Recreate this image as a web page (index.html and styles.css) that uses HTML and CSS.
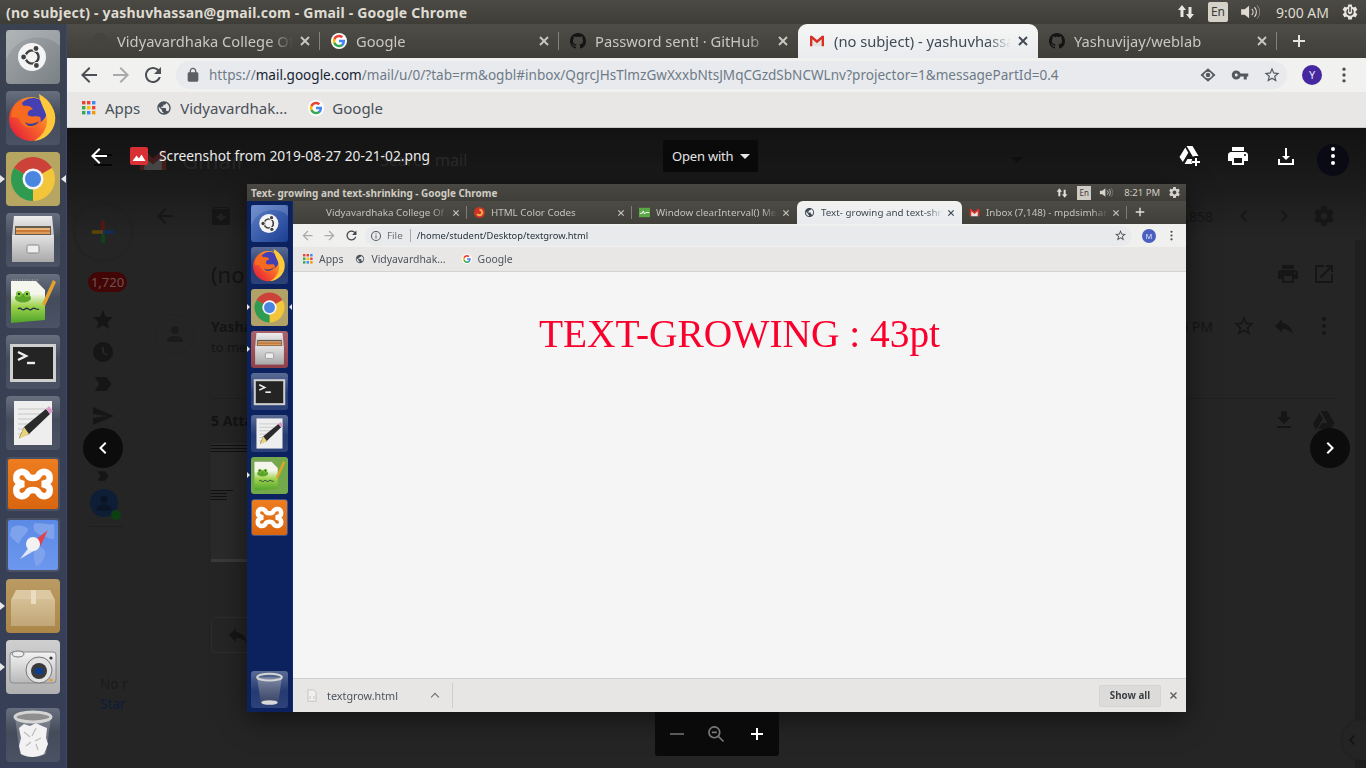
FILE: index.html
```html
<!DOCTYPE html>
<html lang="en">
<head>
    <meta charset="UTF-8">
    <title>(no subject) - yashuvhassan@gmail.com - Gmail - Google Chrome</title>
    <link rel="stylesheet" href="styles.css">
</head>
<body>
    <!-- shared icons -->
    <svg class="defs" xmlns="http://www.w3.org/2000/svg">
        <defs>
            <linearGradient id="g-ff" x1="0.9" y1="0.2" x2="0.1" y2="0.9"><stop offset="0" stop-color="#ffb52e"/><stop offset="0.5" stop-color="#f7632a"/><stop offset="1" stop-color="#e5203a"/></linearGradient>
            <linearGradient id="g-kate" x1="0" y1="0" x2="0" y2="1"><stop offset="0.3" stop-color="#f4f6ee"/><stop offset="0.6" stop-color="#9ed34c"/><stop offset="1" stop-color="#4fa32a"/></linearGradient>
            <linearGradient id="g-cab" x1="0" y1="0" x2="0" y2="1"><stop offset="0" stop-color="#e2e2e2"/><stop offset="1" stop-color="#a9a9a9"/></linearGradient>
            <linearGradient id="g-lid" x1="0" y1="0" x2="0" y2="1"><stop offset="0" stop-color="#ededed"/><stop offset="1" stop-color="#bdbdbd"/></linearGradient>
            <linearGradient id="g-box" x1="0" y1="0" x2="0" y2="1"><stop offset="0" stop-color="#d5bf94"/><stop offset="1" stop-color="#c0a678"/></linearGradient>
            <linearGradient id="g-cam" x1="0" y1="0" x2="0" y2="1"><stop offset="0" stop-color="#f4f4f4"/><stop offset="1" stop-color="#b8b8b8"/></linearGradient>
            <linearGradient id="g-bin" x1="0" y1="0" x2="0" y2="1"><stop offset="0" stop-color="#8d95ab"/><stop offset="1" stop-color="#39415f"/></linearGradient>
        </defs>

        <symbol id="l-ubuntu" viewBox="0 0 54 54">
            <path d="M0 30C10 4 40 2 54 16V0H0Z" fill="#fff" opacity=".14"/>
            <circle cx="26" cy="27" r="14" fill="#f4f4f4"/>
            <circle cx="26" cy="27" r="6.6" fill="none" stroke="#3f3f40" stroke-width="2.4"/>
            <circle cx="30" cy="18.5" r="3.6" fill="#f4f4f4"/><circle cx="17.6" cy="27" r="3.6" fill="#f4f4f4"/><circle cx="30.4" cy="35.5" r="3.6" fill="#f4f4f4"/>
            <circle cx="30" cy="18.5" r="2.4" fill="#3f3f40"/><circle cx="17.6" cy="27" r="2.4" fill="#3f3f40"/><circle cx="30.4" cy="35.5" r="2.4" fill="#3f3f40"/>
        </symbol>
        <symbol id="l-firefox" viewBox="0 0 54 54">
            <circle cx="25" cy="28" r="22" fill="url(#g-ff)"/>
            <ellipse cx="27" cy="20" rx="14" ry="13" fill="#4440b4"/>
            <path d="M5 26C6 16 11 10 17 8 15 11 16 14 18 15 21 14 25 15 27 18 23 19 21 21 22 24 25 27 31 24 34 26 37 31 32 37 25 37 18 37 14 31 13 27Z" fill="#f66b1f"/>
            <path d="M19 31C23 34 29 33 33 30 32 33 28 35 24 35 22 35 20 33 19 31Z" fill="#3b3c9a"/>
            <path d="M33 3C44 9 51 20 49 31 47 42 38 49 28 50 36 45 41 38 41 30 41 20 34 14 33 3Z" fill="#ffc83a"/>
        </symbol>
        <symbol id="l-chrome" viewBox="0 0 54 54">
            <path d="M27 27 8 16A22 22 0 0 1 46 16Z" fill="#cc4238"/>
            <path d="M27 27 46 16A22 22 0 0 1 27 49Z" fill="#f2c53a"/>
            <path d="M27 27 27 49A22 22 0 0 1 8 16Z" fill="#2f9b50"/>
            <circle cx="27" cy="27" r="10.5" fill="#f5f5f5"/><circle cx="27" cy="27" r="8" fill="#4a86e0"/>
        </symbol>
        <symbol id="l-files" viewBox="0 0 54 54">
            <path d="M8 3H46L48 23H6Z" fill="url(#g-lid)"/>
            <rect x="9" y="13" width="36" height="9" fill="#655a50"/>
            <rect x="10" y="15" width="34" height="2" fill="#e8b57a"/><rect x="10" y="17" width="34" height="2" fill="#c97a3a"/><rect x="10" y="19" width="34" height="2" fill="#e09a58"/>
            <rect x="6" y="22" width="42" height="27" fill="url(#g-cab)"/>
            <rect x="21" y="32" width="12" height="8" rx="1.5" fill="#eee" stroke="#888"/>
        </symbol>
        <symbol id="l-kate" viewBox="0 0 54 54">
            <path d="M5 7H30L39 16V46L5 49Z" fill="url(#g-kate)"/>
            <path d="M6 6h26" stroke="#999" stroke-width="1.5" stroke-dasharray="1 1.5"/>
            <ellipse cx="17" cy="24" rx="8" ry="4.5" fill="#5aa428"/><circle cx="13" cy="20" r="3" fill="#7ec63f"/><circle cx="21" cy="20" r="3" fill="#7ec63f"/><circle cx="13" cy="20" r="1.1" fill="#222"/><circle cx="21" cy="20" r="1.1" fill="#222"/>
            <path d="M12 35c3-3 4 3 7 0s4 3 7 0 4 2 7 0" fill="none" stroke="#234" stroke-width="1.4"/>
            <path d="M47 6 50 8 39 32 36 30Z" fill="#e4a22c"/>
        </symbol>
        <symbol id="l-terminal" viewBox="0 0 54 54">
            <rect x="4" y="9" width="46" height="38" fill="#cfcfcf"/>
            <rect x="7" y="12" width="40" height="32" fill="#242424"/>
            <path d="M12 17 20 21 12 25" fill="none" stroke="#eee" stroke-width="2.4"/>
            <path d="M21 28H29" stroke="#eee" stroke-width="2.4"/>
        </symbol>
        <symbol id="l-gedit" viewBox="0 0 54 54">
            <rect x="8" y="5" width="38" height="44" fill="#eeeeee"/>
            <path d="M12 13H42M12 18H42M12 23H38M12 28H32M12 33H26M12 38H24" stroke="#c6c6c6" stroke-width="1.2"/>
            <path d="M13 42 18 31 40 13 44 18 23 38Z" fill="#2b2b2b"/>
            <path d="M13 43 18 31 23 38Z" fill="#ead27a"/>
            <path d="M40 13 43 10 47 15 44 18Z" fill="#dd9ccb"/>
        </symbol>
        <symbol id="l-xampp" viewBox="0 0 54 54">
            <path d="M22 19C18 11 8 13 9 21 9 25 13 26 17 27 13 28 9 29 9 33 8 41 18 43 22 35 24 33 30 33 32 35 36 43 46 41 45 33 45 29 41 28 37 27 41 26 45 25 45 21 46 13 36 11 32 19 30 21 24 21 22 19Z" fill="none" stroke="#fff" stroke-width="7"/>
        </symbol>
        <symbol id="l-compass" viewBox="0 0 54 54">
            <path d="M4 8C12 4 18 6 22 10 20 16 14 18 12 26 8 24 4 20 2 16ZM28 4C36 2 44 6 50 4V20C44 22 40 16 34 16 30 14 26 10 28 4ZM30 30C36 28 42 32 40 38 38 44 34 50 30 50 28 42 26 36 30 30Z" fill="#7ea3ec"/>
            <path d="M43 11 29 22 35 28Z" fill="#e5414b"/>
            <path d="M13 42 26 25 32 31Z" fill="#dfe6f4"/>
            <circle cx="27" cy="26" r="7.6" fill="#f2f2f2"/>
        </symbol>
        <symbol id="l-package" viewBox="0 0 54 54">
            <path d="M10 11H44L49 21H5Z" fill="#dcc8a2"/>
            <rect x="5" y="20" width="44" height="27" fill="url(#g-box)"/>
            <rect x="25" y="11" width="5" height="14" fill="#eadcc0"/>
        </symbol>
        <symbol id="l-camera" viewBox="0 0 54 54">
            <rect x="4" y="12" width="46" height="31" rx="3" fill="url(#g-cam)" stroke="#8a8a8a"/>
            <ellipse cx="12" cy="14" rx="6" ry="3" fill="#eee" stroke="#777"/>
            <circle cx="33" cy="30" r="13" fill="#e2e2e2" stroke="#777"/>
            <circle cx="33" cy="31" r="8" fill="#3a3a3a"/><rect x="29" y="28" width="8" height="6" fill="#0b3d91"/>
            <circle cx="45" cy="18" r="1.6" fill="#333"/><circle cx="45" cy="40" r="1.6" fill="#e89a2c"/>
        </symbol>
        <symbol id="l-trash" viewBox="0 0 54 54">
            <path d="M9 9 14 46C20 50 34 50 40 46L45 9Z" fill="#ffffff" opacity=".22"/>
            <path d="M13 20 18 16 24 18 30 15 36 18 41 20 40 30 42 36 38 46C30 50 22 50 15 46L13 38 15 30Z" fill="#f2f2f2"/>
            <path d="M18 24l6 5M30 20l-4 8M35 30l-6 3M20 38l5-4M32 42l-2-6" stroke="#bcbcbc" stroke-width="1.2"/>
            <ellipse cx="27" cy="9" rx="18" ry="5" fill="#8f8f8f" stroke="#d5d5d5" stroke-width="3"/>
        </symbol>
        <symbol id="l-trash-empty" viewBox="0 0 54 54">
            <path d="M9 9 14 46C20 50 34 50 40 46L45 9Z" fill="url(#g-bin)" opacity=".8"/>
            <ellipse cx="27" cy="46" rx="12" ry="3.4" fill="#d8d8d8"/>
            <ellipse cx="27" cy="9" rx="18" ry="5" fill="none" stroke="#d5d5d5" stroke-width="3"/>
        </symbol>

        <symbol id="i-back" viewBox="0 0 24 24"><path d="M20 11H7.83l5.59-5.59L12 4l-8 8 8 8 1.41-1.41L7.83 13H20v-2z"/></symbol>
        <symbol id="i-forward" viewBox="0 0 24 24"><path d="M12 4l-1.41 1.41L16.17 11H4v2h12.17l-5.58 5.59L12 20l8-8z"/></symbol>
        <symbol id="i-reload" viewBox="0 0 24 24"><path d="M17.65 6.35C16.2 4.9 14.21 4 12 4c-4.42 0-7.99 3.58-7.99 8s3.57 8 7.99 8c3.73 0 6.84-2.55 7.73-6h-2.08c-.82 2.33-3.04 4-5.65 4-3.31 0-6-2.69-6-6s2.69-6 6-6c1.66 0 3.14.69 4.22 1.78L13 11h7V4l-2.35 2.35z"/></symbol>
        <symbol id="i-lock" viewBox="0 0 24 24"><path fill-rule="evenodd" d="M18 8h-1V6c0-2.76-2.24-5-5-5S7 3.24 7 6v2H6c-1.1 0-2 .9-2 2v10c0 1.1.9 2 2 2h12c1.1 0 2-.9 2-2V10c0-1.1-.9-2-2-2zM9 8V6c0-1.66 1.34-3 3-3s3 1.34 3 3v2H9z"/></symbol>
        <symbol id="i-star-o" viewBox="0 0 24 24"><path d="M22 9.24l-7.19-.62L12 2 9.19 8.63 2 9.24l5.46 4.73L5.82 21 12 17.27 18.18 21l-1.63-7.03L22 9.24zM12 15.4l-3.76 2.27 1-4.28-3.32-2.88 4.38-.38L12 6.1l1.71 4.04 4.38.38-3.32 2.88 1 4.28L12 15.4z"/></symbol>
        <symbol id="i-star" viewBox="0 0 24 24"><path d="M12 17.27L18.18 21l-1.64-7.03L22 9.24l-7.19-.61L12 2 9.19 8.63 2 9.24l5.46 4.73L5.82 21z"/></symbol>
        <symbol id="i-key" viewBox="0 0 24 24"><path d="M12.65 10C11.83 7.67 9.61 6 7 6c-3.31 0-6 2.69-6 6s2.69 6 6 6c2.61 0 4.83-1.67 5.65-4H17v4h4v-4h2v-4H12.65zM7 14c-1.1 0-2-.9-2-2s.9-2 2-2 2 .9 2 2-.9 2-2 2z"/></symbol>
        <symbol id="i-eye" viewBox="0 0 24 24"><path fill-rule="evenodd" d="M12 3l10 9-10 9-10-9zM12 7.5c-3 0-5 2.5-6 4.5 1 2 3 4.5 6 4.5s5-2.5 6-4.5c-1-2-3-4.5-6-4.5z"/><circle cx="12" cy="12" r="3"/></symbol>
        <symbol id="i-dots" viewBox="0 0 24 24"><circle cx="12" cy="5" r="2"/><circle cx="12" cy="12" r="2"/><circle cx="12" cy="19" r="2"/></symbol>
        <symbol id="i-print" viewBox="0 0 24 24"><path d="M19 8H5c-1.66 0-3 1.34-3 3v6h4v4h12v-4h4v-6c0-1.66-1.34-3-3-3zm-3 11H8v-5h8v5zm3-7c-.55 0-1-.45-1-1s.45-1 1-1 1 .45 1 1-.45 1-1 1zm-1-9H6v4h12V3z"/></symbol>
        <symbol id="i-download" viewBox="0 0 24 24"><path d="M19 9h-4V3H9v6H5l7 7 7-7zM5 18v2h14v-2H5z"/></symbol>
        <symbol id="i-save" viewBox="0 0 24 24"><path d="M13 4h-2v8H8l4 4 4-4h-3zM4 15h2v4h12v-4h2v6H4z"/></symbol>
        <symbol id="i-gear" viewBox="0 0 24 24"><path d="M19.43 12.98c.04-.32.07-.64.07-.98s-.03-.66-.07-.98l2.11-1.65c.19-.15.24-.42.12-.64l-2-3.46c-.12-.22-.39-.3-.61-.22l-2.49 1c-.52-.4-1.08-.73-1.69-.98l-.38-2.65C14.46 2.18 14.25 2 14 2h-4c-.25 0-.46.18-.49.42l-.38 2.65c-.61.25-1.17.59-1.69.98l-2.49-1c-.23-.09-.49 0-.61.22l-2 3.46c-.13.22-.07.49.12.64l2.11 1.65c-.04.32-.07.65-.07.98s.03.66.07.98l-2.11 1.65c-.19.15-.24.42-.12.64l2 3.46c.12.22.39.3.61.22l2.49-1c.52.4 1.08.73 1.69.98l.38 2.65c.03.24.24.42.49.42h4c.25 0 .46-.18.49-.42l.38-2.65c.61-.25 1.17-.59 1.69-.98l2.49 1c.23.09.49 0 .61-.22l2-3.46c.12-.22.07-.49-.12-.64l-2.11-1.65zM12 15.5c-1.93 0-3.5-1.57-3.5-3.5s1.57-3.5 3.5-3.5 3.5 1.57 3.5 3.5-1.57 3.5-3.5 3.5z"/></symbol>
        <symbol id="i-power" viewBox="0 0 24 24"><path fill-rule="evenodd" d="M19.43 12.98c.04-.32.07-.64.07-.98s-.03-.66-.07-.98l2.11-1.65c.19-.15.24-.42.12-.64l-2-3.46c-.12-.22-.39-.3-.61-.22l-2.49 1c-.52-.4-1.08-.73-1.69-.98l-.38-2.65C14.46 2.18 14.25 2 14 2h-4c-.25 0-.46.18-.49.42l-.38 2.65c-.61.25-1.17.59-1.69.98l-2.49-1c-.23-.09-.49 0-.61.22l-2 3.46c-.13.22-.07.49.12.64l2.11 1.65c-.04.32-.07.65-.07.98s.03.66.07.98l-2.11 1.65c-.19.15-.24.42-.12.64l2 3.46c.12.22.39.3.61.22l2.49-1c.52.4 1.08.73 1.69.98l.38 2.65c.03.24.24.42.49.42h4c.25 0 .46-.18.49-.42l.38-2.65c.61-.25 1.17-.59 1.69-.98l2.49 1c.23.09.49 0 .61-.22l2-3.46c.12-.22.07-.49-.12-.64l-2.11-1.65zM12 17a5 5 0 0 1-2.5-9.3v2.4a3 3 0 1 0 5 0V7.7A5 5 0 0 1 12 17zM11 5h2v7h-2z"/></symbol>
        <symbol id="i-reply" viewBox="0 0 24 24"><path d="M10 9V5l-7 7 7 7v-4.1c5 0 8.5 1.6 11 5.1-1-5-4-10-11-11z"/></symbol>
        <symbol id="i-open" viewBox="0 0 24 24"><path d="M19 19H5V5h7V3H5c-1.11 0-2 .9-2 2v14c0 1.1.89 2 2 2h14c1.1 0 2-.9 2-2v-7h-2v7zM14 3v2h3.59l-9.83 9.83 1.41 1.41L19 6.41V10h2V3h-7z"/></symbol>
        <symbol id="i-clock" viewBox="0 0 24 24"><path fill-rule="evenodd" d="M12 2a10 10 0 1 0 0 20 10 10 0 0 0 0-20zm1 5h-2v6l5 3 1-1.6-4-2.4z"/></symbol>
        <symbol id="i-label" viewBox="0 0 24 24"><path d="M3.5 18.99l11 .01c.67 0 1.27-.33 1.63-.84L20.5 12l-4.37-6.16c-.36-.51-.96-.84-1.63-.84l-11 .01L8.34 12 3.5 18.99z"/></symbol>
        <symbol id="i-send" viewBox="0 0 24 24"><path d="M2.01 21L23 12 2.01 3 2 10l15 2-15 2z"/></symbol>
        <symbol id="i-archive" viewBox="0 0 24 24"><path d="M20.54 5.23l-1.39-1.68C18.88 3.21 18.47 3 18 3H6c-.47 0-.88.21-1.16.55L3.46 5.23C3.17 5.57 3 6.02 3 6.5V19c0 1.1.9 2 2 2h14c1.1 0 2-.9 2-2V6.5c0-.48-.17-.93-.46-1.27zM12 17.5L6.5 12H10v-2h4v2h3.5L12 17.5zM5.12 5l.81-1h12l.94 1H5.12z"/></symbol>
        <symbol id="i-left" viewBox="0 0 24 24"><path d="M15.41 7.41L14 6l-6 6 6 6 1.41-1.41L10.83 12z"/></symbol>
        <symbol id="i-right" viewBox="0 0 24 24"><path d="M10 6L8.59 7.41 13.17 12l-4.58 4.59L10 18l6-6z"/></symbol>
        <symbol id="i-drive" viewBox="0 0 24 24"><path d="M8.5 3h7l7 12h-7zM7.3 5l3.5 6-6.5 10.5L1 16zM6.5 21l3.5-6h12.5L19 21z"/></symbol>
        <symbol id="i-drive-add" viewBox="0 0 24 24"><path d="M8.5 2h6l6 10h-3.2a5 5 0 0 0-2.4.8zM7.3 3.6l3 5.2L4.8 18 1.5 13zM6.5 20l3-5h4.6a5 5 0 0 0 .4 5zM17 14h2v3h3v2h-3v3h-2v-3h-3v-2h3z"/></symbol>
        <symbol id="i-globe" viewBox="0 0 24 24"><path d="M12 2C6.48 2 2 6.48 2 12s4.48 10 10 10 10-4.48 10-10S17.52 2 12 2zm-1 17.93c-3.95-.49-7-3.85-7-7.93 0-.62.08-1.21.21-1.79L9 15v1c0 1.1.9 2 2 2v1.93zm6.9-2.54c-.26-.81-1-1.39-1.9-1.39h-1v-3c0-.55-.45-1-1-1H8v-2h2c.55 0 1-.45 1-1V7h2c1.1 0 2-.9 2-2v-.41c2.93 1.19 5 4.06 5 7.41 0 2.08-.8 3.97-2.1 5.39z"/></symbol>
        <symbol id="i-info" viewBox="0 0 24 24"><path fill-rule="evenodd" d="M12 2a10 10 0 1 0 0 20 10 10 0 0 0 0-20zm0 2a8 8 0 1 1 0 16 8 8 0 0 1 0-16zm-1 3h2v2h-2zm0 4h2v6h-2z"/></symbol>
        <symbol id="i-github" viewBox="0 0 16 16"><path d="M8 0C3.58 0 0 3.58 0 8c0 3.54 2.29 6.53 5.47 7.59.4.07.55-.17.55-.38 0-.19-.01-.82-.01-1.49-2.01.37-2.53-.49-2.69-.94-.09-.23-.48-.94-.82-1.13-.28-.15-.68-.52-.01-.53.63-.01 1.08.58 1.23.82.72 1.21 1.87.87 2.33.66.07-.52.28-.87.51-1.07-1.78-.2-3.64-.89-3.64-3.95 0-.87.31-1.59.82-2.15-.08-.2-.36-1.02.08-2.12 0 0 .67-.21 2.2.82.64-.18 1.32-.27 2-.27.68 0 1.36.09 2 .27 1.53-1.04 2.2-.82 2.2-.82.44 1.1.16 1.92.08 2.12.51.56.82 1.27.82 2.15 0 3.07-1.87 3.75-3.65 3.95.29.25.54.73.54 1.48 0 1.07-.01 1.93-.01 2.2 0 .21.15.46.55.38A8.013 8.013 0 0016 8c0-4.42-3.58-8-8-8z"/></symbol>
        <symbol id="i-google" viewBox="-4 -4 56 56">
            <circle cx="24" cy="24" r="28" fill="#fff"/>
            <path fill="#4285f4" d="M45.1 24.5c0-1.6-.1-3.1-.4-4.5H24v8.5h11.8c-.5 2.7-2.1 5-4.4 6.6v5.5h7.1c4.2-3.8 6.6-9.5 6.6-16.1z"/>
            <path fill="#34a853" d="M24 46c5.9 0 10.9-2 14.5-5.3l-7.1-5.5c-2 1.3-4.5 2.1-7.4 2.1-5.7 0-10.5-3.8-12.2-9H4.5v5.7C8.1 41.1 15.5 46 24 46z"/>
            <path fill="#fbbc05" d="M11.8 28.3c-.4-1.3-.7-2.7-.7-4.3s.3-3 .7-4.3V14H4.5C3 17 2.2 20.4 2.2 24s.8 7 2.3 10z"/>
            <path fill="#ea4335" d="M24 10.7c3.2 0 6.1 1.1 8.4 3.3l6.3-6.3C34.9 4.2 29.9 2 24 2 15.5 2 8.1 6.9 4.5 14l7.3 5.7c1.7-5.2 6.5-9 12.2-9z"/>
        </symbol>
        <symbol id="i-gmail" viewBox="0 0 48 48">
            <path d="M8 12 24 26 40 12V40H8Z" fill="#e3e3e3"/>
            <path d="M3 8H9L24 21 39 8H45V40H38V19L24 31 10 19V40H3Z" fill="#d93025"/>
        </symbol>
        <symbol id="i-apps" viewBox="0 0 14 14">
            <rect width="3.4" height="3.4" x="0" y="0" fill="#ea4335"/><rect width="3.4" height="3.4" x="5" y="0" fill="#ea4335"/><rect width="3.4" height="3.4" x="10" y="0" fill="#4285f4"/>
            <rect width="3.4" height="3.4" x="0" y="5" fill="#34a853"/><rect width="3.4" height="3.4" x="5" y="5" fill="#fbbc05"/><rect width="3.4" height="3.4" x="10" y="5" fill="#ea4335"/>
            <rect width="3.4" height="3.4" x="0" y="10" fill="#34a853"/><rect width="3.4" height="3.4" x="5" y="10" fill="#4285f4"/><rect width="3.4" height="3.4" x="10" y="10" fill="#f29900"/>
        </symbol>
        <symbol id="i-photo" viewBox="0 0 18 18">
            <rect width="18" height="18" rx="2" fill="#d93035"/>
            <path d="M2.5 14 6.5 8.5 9 11.5 11.5 7.5 15.5 14Z" fill="#fff"/>
        </symbol>
        <symbol id="i-net" viewBox="0 0 18 18"><path d="M5 2 9 7H6.5V14H3.5V7H1ZM13 16 9 11H11.5V4H14.5V11H17Z"/></symbol>
        <symbol id="i-sound" viewBox="0 0 22 18"><path d="M1 6H5L10 2V16L5 12H1Z"/><path d="M13 5.5a5 5 0 0 1 0 7M16 3.5a8 8 0 0 1 0 11" fill="none" stroke="currentColor" stroke-width="1.3"/><path d="M19 1.5a11 11 0 0 1 0 15" fill="none" stroke="currentColor" stroke-width="1" opacity=".5"/></symbol>
        <symbol id="i-close" viewBox="0 0 12 12"><path d="M2 2 10 10M10 2 2 10" fill="none" stroke="currentColor" stroke-width="1.9"/></symbol>
        <symbol id="i-plus" viewBox="0 0 14 14"><path d="M7 1V13M1 7H13" fill="none" stroke="currentColor" stroke-width="2"/></symbol>
        <symbol id="i-html" viewBox="0 0 14 14"><circle cx="7" cy="7" r="7" fill="#cf3327"/><path d="M7 3.5a3.5 3.5 0 1 1-3 5.3" fill="none" stroke="#f6b24a" stroke-width="2.4"/></symbol>
        <symbol id="i-chart" viewBox="0 0 14 12"><rect width="14" height="12" fill="#59a845"/><path d="M1 7H4L5.5 4 7 8 8.5 6H13" fill="none" stroke="#fff" stroke-width="1.2"/></symbol>
        <symbol id="i-zoom-out" viewBox="0 0 24 24"><circle cx="10" cy="10" r="6.5" fill="none" stroke="currentColor" stroke-width="2"/><path d="M7 10H13M15 15 21 21" fill="none" stroke="currentColor" stroke-width="2"/></symbol>
        <symbol id="i-file" viewBox="0 0 12 16"><path d="M1 1H8L11 4V15H1Z" fill="#efefed" stroke="#bdbdbb"/><path d="M4 9 3 10.5 4 12M8 9 9 10.5 8 12" fill="none" stroke="#9a9a98" stroke-width=".8"/></symbol>
    </svg>

    <header class="panel">
        <span class="panel-title">(no subject) - yashuvhassan@gmail.com - Gmail - Google Chrome</span>
        <div class="panel-tray">
            <svg class="tray-net"><use href="#i-net"/></svg>
            <span class="tray-lang">En</span>
            <svg class="tray-sound"><use href="#i-sound"/></svg>
            <span class="tray-time">9:00 AM</span>
            <svg class="tray-power"><use href="#i-power"/></svg>
        </div>
    </header>

    <div class="desktop">
        <nav class="launcher">
            <div class="tile tile-ubuntu"><svg><use href="#l-ubuntu"/></svg></div>
            <div class="tile tile-glass"><svg><use href="#l-firefox"/></svg></div>
            <div class="tile tile-gold running active"><svg><use href="#l-chrome"/></svg></div>
            <div class="tile tile-glass"><svg><use href="#l-files"/></svg></div>
            <div class="tile tile-glass"><svg><use href="#l-kate"/></svg></div>
            <div class="tile tile-glass"><svg><use href="#l-terminal"/></svg></div>
            <div class="tile tile-glass"><svg><use href="#l-gedit"/></svg></div>
            <div class="tile tile-orange"><svg><use href="#l-xampp"/></svg></div>
            <div class="tile tile-blue"><svg><use href="#l-compass"/></svg></div>
            <div class="tile tile-tan running"><svg><use href="#l-package"/></svg></div>
            <div class="tile tile-silver running"><svg><use href="#l-camera"/></svg></div>
            <div class="tile tile-glass tile-last"><svg><use href="#l-trash"/></svg></div>
        </nav>

        <main class="chrome">
            <div class="tabstrip">
                <div class="tab">
                    <span class="tab-icon tab-icon-dim"></span>
                    <span class="tab-title">Vidyavardhaka College Of Engineering</span>
                    <svg class="tab-close"><use href="#i-close"/></svg>
                </div>
                <div class="tab">
                    <svg class="tab-icon"><use href="#i-google"/></svg>
                    <span class="tab-title">Google</span>
                    <svg class="tab-close"><use href="#i-close"/></svg>
                </div>
                <div class="tab tab-nosep">
                    <svg class="tab-icon icon-dark"><use href="#i-github"/></svg>
                    <span class="tab-title">Password sent! · GitHub</span>
                    <svg class="tab-close"><use href="#i-close"/></svg>
                </div>
                <div class="tab tab-active">
                    <svg class="tab-icon"><use href="#i-gmail"/></svg>
                    <span class="tab-title">(no subject) - yashuvhassan@gmail.com</span>
                    <svg class="tab-close"><use href="#i-close"/></svg>
                </div>
                <div class="tab">
                    <svg class="tab-icon icon-dark"><use href="#i-github"/></svg>
                    <span class="tab-title">Yashuvijay/weblab</span>
                    <svg class="tab-close"><use href="#i-close"/></svg>
                </div>
                <svg class="tab-new"><use href="#i-plus"/></svg>
            </div>

            <div class="toolbar">
                <svg class="tool"><use href="#i-back"/></svg>
                <svg class="tool tool-off"><use href="#i-forward"/></svg>
                <svg class="tool"><use href="#i-reload"/></svg>
                <div class="omnibox">
                    <svg class="omni-lock"><use href="#i-lock"/></svg>
                    <span class="omni-url">https://<b>mail.google.com</b>/mail/u/0/?tab=rm&amp;ogbl#inbox/QgrcJHsTlmzGwXxxbNtsJMqCGzdSbNCWLnv?projector=1&amp;messagePartId=0.4</span>
                    <svg class="omni-act"><use href="#i-eye"/></svg>
                    <svg class="omni-act"><use href="#i-key"/></svg>
                    <svg class="omni-act"><use href="#i-star-o"/></svg>
                </div>
                <span class="avatar">Y</span>
                <svg class="tool tool-menu"><use href="#i-dots"/></svg>
            </div>

            <div class="bookmarks">
                <span class="mark mark-apps"><svg class="apps-icon"><use href="#i-apps"/></svg>Apps</span>
                <span class="mark mark-vidya"><svg class="mark-icon"><use href="#i-globe"/></svg>Vidyavardhak...</span>
                <span class="mark"><svg class="mark-icon"><use href="#i-google"/></svg>Google</span>
            </div>

            <section class="viewer">
                <!-- gmail page dimmed behind the preview -->
                <div class="ghost">
                    <div class="ghost-head">
                        <span class="ghost-burger"></span>
                        <svg class="ghost-m"><use href="#i-gmail"/></svg>
                        <span class="ghost-logo">Gmail</span>
                        <span class="ghost-search">Search mail</span>
                        <span class="ghost-caret"></span>
                    </div>
                    <div class="ghost-body">
                        <div class="ghost-nav">
                            <div class="ghost-compose"><svg class="ghost-plus" viewBox="0 0 28 28"><path d="M14 2V14" stroke="#571512" stroke-width="4"/><path d="M14 14V26" stroke="#12411f" stroke-width="4"/><path d="M2 14H14" stroke="#5b430a" stroke-width="4"/><path d="M14 14H26" stroke="#122c55" stroke-width="4"/></svg></div>
                            <span class="ghost-badge">1,720</span>
                            <svg class="gi gi-nav"><use href="#i-star"/></svg>
                            <svg class="gi gi-nav"><use href="#i-clock"/></svg>
                            <svg class="gi gi-nav"><use href="#i-label"/></svg>
                            <svg class="gi gi-nav"><use href="#i-send"/></svg>
                            <svg class="gi gi-nav gi-hidden"><use href="#i-send"/></svg>
                            <svg class="gi gi-nav gi-short"><use href="#i-label"/></svg>
                            <div class="ghost-user"><svg viewBox="0 0 24 24"><circle cx="12" cy="8" r="4.4"/><path d="M3 21c0-5 4-7 9-7s9 2 9 7z"/></svg><span class="ghost-dot"></span></div>
                            <div class="ghost-rule"></div>
                            <p class="ghost-note">No r</p>
                            <p class="ghost-note ghost-link">Star</p>
                        </div>
                        <div class="ghost-main">
                            <div class="grow grow-top">
                                <svg class="gi gi-back"><use href="#i-back"/></svg>
                                <svg class="gi"><use href="#i-archive"/></svg>
                                <div class="grow-right">
                                    <span class="ghost-text">1,858</span>
                                    <svg class="gi"><use href="#i-left"/></svg>
                                    <svg class="gi"><use href="#i-right"/></svg>
                                    <svg class="gi"><use href="#i-gear"/></svg>
                                </div>
                            </div>
                            <div class="grow grow-subject">
                                <span class="ghost-subject">(no subject)</span>
                                <div class="grow-right grow-tight">
                                    <svg class="gi"><use href="#i-print"/></svg>
                                    <svg class="gi"><use href="#i-open"/></svg>
                                </div>
                            </div>
                            <div class="grow grow-sender">
                                <div class="ghost-face"><svg viewBox="0 0 24 24"><circle cx="12" cy="8" r="4"/><path d="M4 20c0-5 4-6 8-6s8 1 8 6z"/></svg></div>
                                <div class="ghost-from"><b>Yashas</b><span>to me,</span></div>
                                <div class="grow-right">
                                    <span class="ghost-text">6 PM</span>
                                    <svg class="gi"><use href="#i-star-o"/></svg>
                                    <svg class="gi"><use href="#i-reply"/></svg>
                                    <svg class="gi"><use href="#i-dots"/></svg>
                                </div>
                            </div>
                            <div class="ghost-dots"></div>
                            <div class="grow grow-attach">
                                <b class="ghost-count">5 Attachments</b>
                                <div class="grow-right">
                                    <svg class="gi"><use href="#i-download"/></svg>
                                    <svg class="gi"><use href="#i-drive"/></svg>
                                </div>
                            </div>
                            <div class="ghost-thumb"><i></i><i></i><i></i><i></i><i></i><i></i><i></i></div>
                            <div class="ghost-reply"><svg class="gi"><use href="#i-reply"/></svg></div>
                        </div>
                        <div class="ghost-scroll"></div>
                    </div>
                </div>

                <div class="viewer-head">
                    <svg class="vh-back"><use href="#i-back"/></svg>
                    <svg class="vh-photo"><use href="#i-photo"/></svg>
                    <span class="vh-name">Screenshot from 2019-08-27 20-21-02.png</span>
                    <button class="open-with">Open with <span class="caret"></span></button>
                    <div class="vh-actions">
                        <svg class="vh-act"><use href="#i-drive-add"/></svg>
                        <svg class="vh-act"><use href="#i-print"/></svg>
                        <svg class="vh-act"><use href="#i-save"/></svg>
                        <span class="vh-more"><svg><use href="#i-dots"/></svg></span>
                    </div>
                </div>

                <button class="page-nav page-prev"><svg><use href="#i-left"/></svg></button>
                <button class="page-nav page-next"><svg><use href="#i-right"/></svg></button>
                <span class="side-toggle"><svg><use href="#i-left"/></svg></span>

                <!-- the attached screenshot -->
                <div class="shot">
                    <div class="s-panel">
                        <span class="s-title">Text- growing and text-shrinking - Google Chrome</span>
                        <div class="s-tray">
                            <svg class="s-net"><use href="#i-net"/></svg>
                            <span class="s-lang">En</span>
                            <svg class="s-sound"><use href="#i-sound"/></svg>
                            <span class="s-time">8:21 PM</span>
                            <svg class="s-power"><use href="#i-gear"/></svg>
                        </div>
                    </div>
                    <div class="s-desktop">
                        <div class="s-launcher">
                            <div class="s-tile s-tile-ubuntu"><svg><use href="#l-ubuntu"/></svg></div>
                            <div class="s-tile s-tile-glass"><svg><use href="#l-firefox"/></svg></div>
                            <div class="s-tile s-tile-gold s-running s-active"><svg><use href="#l-chrome"/></svg></div>
                            <div class="s-tile s-tile-red s-running"><svg><use href="#l-files"/></svg></div>
                            <div class="s-tile s-tile-glass"><svg><use href="#l-terminal"/></svg></div>
                            <div class="s-tile s-tile-glass"><svg><use href="#l-gedit"/></svg></div>
                            <div class="s-tile s-tile-green s-running"><svg><use href="#l-kate"/></svg></div>
                            <div class="s-tile s-tile-orange"><svg><use href="#l-xampp"/></svg></div>
                            <div class="s-tile s-tile-glass s-last"><svg><use href="#l-trash-empty"/></svg></div>
                        </div>
                        <div class="s-chrome">
                            <div class="s-tabs">
                                <div class="s-tab">
                                    <span class="s-fav"></span>
                                    <span class="s-tab-title">Vidyavardhaka College Of Engineering</span>
                                    <svg class="s-close"><use href="#i-close"/></svg>
                                </div>
                                <div class="s-tab">
                                    <svg class="s-fav"><use href="#i-html"/></svg>
                                    <span class="s-tab-title">HTML Color Codes</span>
                                    <svg class="s-close"><use href="#i-close"/></svg>
                                </div>
                                <div class="s-tab s-nosep">
                                    <svg class="s-fav"><use href="#i-chart"/></svg>
                                    <span class="s-tab-title">Window clearInterval() Method</span>
                                    <svg class="s-close"><use href="#i-close"/></svg>
                                </div>
                                <div class="s-tab s-tab-active">
                                    <svg class="s-fav"><use href="#i-globe"/></svg>
                                    <span class="s-tab-title">Text- growing and text-shrinking</span>
                                    <svg class="s-close"><use href="#i-close"/></svg>
                                </div>
                                <div class="s-tab">
                                    <svg class="s-fav"><use href="#i-gmail"/></svg>
                                    <span class="s-tab-title">Inbox (7,148) - mpdsimhan@gmail.com</span>
                                    <svg class="s-close"><use href="#i-close"/></svg>
                                </div>
                                <svg class="s-new"><use href="#i-plus"/></svg>
                            </div>
                            <div class="s-toolbar">
                                <svg class="s-tool s-off"><use href="#i-back"/></svg>
                                <svg class="s-tool s-off"><use href="#i-forward"/></svg>
                                <svg class="s-tool"><use href="#i-reload"/></svg>
                                <div class="s-omni">
                                    <svg class="s-info"><use href="#i-info"/></svg>
                                    <span class="s-file">File</span>
                                    <span class="s-path">/home/student/Desktop/textgrow.html</span>
                                    <svg class="s-star"><use href="#i-star-o"/></svg>
                                </div>
                                <span class="s-avatar">M</span>
                                <svg class="s-tool s-menu"><use href="#i-dots"/></svg>
                            </div>
                            <div class="s-marks">
                                <span class="s-mark s-mark-apps"><svg><use href="#i-apps"/></svg>Apps</span>
                                <span class="s-mark s-mark-vidya"><svg><use href="#i-globe"/></svg>Vidyavardhak...</span>
                                <span class="s-mark"><svg><use href="#i-google"/></svg>Google</span>
                            </div>
                            <div class="s-page">
                                <h1 class="s-heading">TEXT-GROWING : 43pt</h1>
                            </div>
                            <div class="s-downloads">
                                <svg class="s-dl-icon"><use href="#i-file"/></svg>
                                <span class="s-dl-name">textgrow.html</span>
                                <span class="s-dl-caret"></span>
                                <span class="s-dl-sep"></span>
                                <button class="s-showall">Show all</button>
                                <svg class="s-dl-close"><use href="#i-close"/></svg>
                            </div>
                        </div>
                    </div>
                </div>

                <div class="zoombar">
                    <span class="zb-minus"></span>
                    <svg class="zb-lens"><use href="#i-zoom-out"/></svg>
                    <svg class="zb-plus"><use href="#i-plus"/></svg>
                </div>
            </section>
        </main>
    </div>
</body>
</html>
```

FILE: styles.css
```css
* {
    box-sizing: border-box;
}

body {
    margin: 0;
    width: 1366px;
    height: 768px;
    overflow: hidden;
    font-family: "Noto Sans", sans-serif;
    background-color: #252525;
    display: flex;
    flex-direction: column;
}

svg {
    display: block;
    fill: currentColor;
    flex: none;
}

p {
    margin: 0;
}

button {
    font-family: inherit;
    border: none;
    padding: 0;
}

.defs {
    position: absolute;
    width: 0;
    height: 0;
}

/* ubuntu top panel */
.panel {
    height: 24px;
    flex: none;
    display: flex;
    align-items: center;
    padding-left: 6px;
    background: linear-gradient(#4c4a44, #3e3d38);
    color: #dfdbd2;
}

.panel-title {
    font-size: 14px;
    font-weight: 700;
    letter-spacing: .2px;
    white-space: nowrap;
}

.panel-tray {
    margin-left: auto;
    display: flex;
    align-items: center;
}

.tray-net {
    width: 18px;
    height: 18px;
    color: #e8e6df;
}

.tray-lang {
    width: 20px;
    height: 20px;
    margin-left: 13px;
    border-radius: 2px;
    background-color: #d5d2ca;
    color: #3c3b37;
    font-size: 12px;
    line-height: 20px;
    text-align: center;
}

.tray-sound {
    width: 20px;
    height: 16px;
    margin-left: 12px;
    color: #dfdbd2;
}

.tray-time {
    margin-left: 16px;
    font-size: 14px;
    color: #dfdbd2;
}

.tray-power {
    width: 18px;
    height: 18px;
    margin: 0 7px 0 12px;
    color: #e8e6df;
}

.desktop {
    flex: 1;
    display: flex;
    min-height: 0;
}

/* launcher */
.launcher {
    width: 67px;
    flex: none;
    display: flex;
    flex-direction: column;
    gap: 7px;
    padding: 6px 0 6px 6px;
    background: linear-gradient(#3a4150, #373f58);
    border-right: 1px solid #3c4678;
}

.tile {
    position: relative;
    width: 54px;
    height: 54px;
    flex: none;
    border-radius: 4px;
}

.tile svg,
.s-tile svg {
    width: 100%;
    height: 100%;
}

.tile-last {
    margin-top: auto;
}

.tile-glass {
    background: linear-gradient(#686f7e, #444b5b 45%, #4b5264);
}

.tile-ubuntu {
    background: linear-gradient(135deg, #a4a9ac, #7a8185);
}

.tile-gold {
    background-color: #b7a562;
}

.tile-orange {
    background: linear-gradient(#ee7d20, #d9660f);
    border: 2px solid #4a5163;
}

.tile-blue {
    background: linear-gradient(#5b8ae6, #6d97ee);
    border: 2px solid #4a5163;
}

.tile-tan {
    background: linear-gradient(#ba9b63, #ab8647);
}

.tile-silver {
    background: linear-gradient(#cfcfcf, #b0b0b0);
}

.running::before {
    content: "";
    position: absolute;
    left: -6px;
    top: 23px;
    border: 4px solid transparent;
    border-left: 5px solid #e6e6e6;
    border-right: none;
}

.active::after {
    content: "";
    position: absolute;
    right: -6px;
    top: 23px;
    border: 4px solid transparent;
    border-right: 5px solid #e6e6e6;
    border-left: none;
}

/* browser */
.chrome {
    flex: 1;
    min-width: 0;
    display: flex;
    flex-direction: column;
}

.tabstrip {
    height: 34px;
    flex: none;
    display: flex;
    align-items: stretch;
    padding-left: 14px;
    background: linear-gradient(#4f4d47, #3f3e39);
    color: #c9c7c0;
}

.tab {
    width: 239px;
    display: flex;
    align-items: center;
    padding: 0 9px 0 11px;
    position: relative;
}

.tab::after {
    content: "";
    position: absolute;
    right: 0;
    top: 8px;
    bottom: 8px;
    width: 1px;
    background-color: #84827c;
}

.tab-nosep::after,
.tab-active::after {
    display: none;
}

.tab-active {
    width: 240px;
    background: linear-gradient(#f6f6f5, #e9ebee);
    border-radius: 9px 9px 0 0;
    color: #3f4a55;
}

.tab-icon {
    width: 16px;
    height: 16px;
    flex: none;
}

.tab-icon-dim {
    border-radius: 50%;
    background-color: #45443f;
}

.icon-dark {
    color: #141414;
}

.tab-title {
    flex: 1;
    min-width: 0;
    margin: -1px 0 0 9px;
    font-size: 14.7px;
    white-space: nowrap;
    overflow: hidden;
    -webkit-mask-image: linear-gradient(to left, transparent, #000 24px);
    mask-image: linear-gradient(to left, transparent, #000 24px);
}

.tab-close {
    width: 12px;
    height: 12px;
    margin-left: 6px;
    flex: none;
}

.tab-new {
    width: 14px;
    height: 14px;
    margin: 10px 0 0 15px;
    color: #e4e2dc;
}

.toolbar {
    height: 34px;
    flex: none;
    display: flex;
    align-items: center;
    padding-left: 10px;
    background-color: #f1f1f0;
    color: #4c4f53;
}

.tool {
    width: 24px;
    height: 24px;
    margin-right: 8px;
}

.tool-off {
    color: #a8a9ab;
}

.omnibox {
    width: 1111px;
    height: 28px;
    margin-left: 3px;
    display: flex;
    align-items: center;
    padding-left: 9px;
    border-radius: 14px;
    background-color: #e8eaee;
}

.omni-lock {
    width: 16px;
    height: 16px;
    color: #5c5f63;
}

.omni-url {
    margin-left: 8px;
    font-size: 13.55px;
    color: #6e7b87;
    white-space: nowrap;
    flex: 1;
}

.omni-url b {
    font-weight: 400;
    color: #16222e;
}

.omni-act {
    width: 18px;
    height: 18px;
    margin-right: 14px;
    color: #55585c;
}

.omni-act:last-child {
    margin-right: 6px;
}

.avatar {
    width: 20px;
    height: 20px;
    margin-left: 15px;
    border-radius: 50%;
    background-color: #4527a0;
    color: #e8e6f4;
    font-size: 11px;
    line-height: 20px;
    text-align: center;
}

.tool-menu {
    width: 20px;
    height: 20px;
    margin: 0 0 0 12px;
}

.bookmarks {
    height: 36px;
    flex: none;
    display: flex;
    align-items: center;
    padding: 0 0 3px 15px;
    background-color: #e8e7e5;
    border-bottom: 1px solid #c9c9c9;
    color: #48505a;
    font-size: 15px;
}

.mark {
    display: flex;
    align-items: center;
    white-space: nowrap;
}

.apps-icon {
    width: 14px;
    height: 14px;
    margin-right: 9px;
}

.mark-icon {
    width: 16px;
    height: 16px;
    margin-right: 8px;
}

.mark-apps {
    margin-right: 16px;
}

.mark-vidya {
    margin-right: 21px;
}

/* attachment viewer */
.viewer {
    position: relative;
    flex: 1;
    min-height: 0;
    background: linear-gradient(#121212, #1b1b1b 56px, #252525 110px);
    overflow: hidden;
    color: #fff;
}

.viewer-head {
    position: relative;
    height: 56px;
    display: flex;
    align-items: center;
    padding-left: 20px;
}

.vh-back {
    width: 24px;
    height: 24px;
    margin-top: -1px;
    color: #fff;
}

.vh-photo {
    width: 18px;
    height: 18px;
    margin-left: 19px;
}

.vh-name {
    width: 504px;
    margin: -2px 0 0 11px;
    font-size: 13.75px;
    color: #ececec;
    white-space: nowrap;
}

.open-with {
    width: 95px;
    height: 32px;
    display: flex;
    align-items: center;
    padding-left: 9px;
    border-radius: 2px;
    background-color: #0a0a0a;
    color: #e6e6e6;
    font-size: 13px;
    letter-spacing: -.2px;
    white-space: nowrap;
}

.caret {
    margin-left: 7px;
    border: 5px solid transparent;
    border-top: 5px solid #e6e6e6;
    border-bottom: none;
}

.vh-actions {
    margin-left: auto;
    display: flex;
    align-items: center;
    gap: 24px;
    padding-right: 17px;
}

.vh-act {
    width: 24px;
    height: 24px;
    color: #fff;
}

.vh-more {
    width: 32px;
    height: 32px;
    margin: 8px 0 0 -5px;
    border-radius: 50%;
    background-color: #0a0a14;
    color: #fff;
    display: flex;
    align-items: center;
    justify-content: center;
}

.vh-more svg {
    width: 24px;
    height: 24px;
    margin-top: -8px;
}

.page-nav {
    position: absolute;
    top: 300px;
    width: 40px;
    height: 40px;
    border-radius: 50%;
    background-color: #0c0c0c;
    color: #fff;
    display: flex;
    align-items: center;
    justify-content: center;
}

.page-nav svg {
    width: 24px;
    height: 24px;
}

.page-prev {
    left: 16px;
}

.page-next {
    right: 16px;
}

.side-toggle {
    position: absolute;
    right: -16px;
    top: 592px;
    width: 40px;
    height: 40px;
    border-radius: 50%;
    background-color: #242424;
    box-shadow: 0 0 2px #1b1b1b;
    color: #141414;
    display: flex;
    align-items: center;
    padding-left: 0;
}

.side-toggle svg {
    width: 20px;
    height: 20px;
}

/* dimmed gmail */
.ghost {
    position: absolute;
    inset: 0;
    display: flex;
    flex-direction: column;
    color: #171717;
}

.ghost-head {
    height: 56px;
    flex: none;
    display: flex;
    align-items: center;
    padding-top: 8px;
    padding-left: 27px;
    color: #262626;
}

.ghost-burger {
    width: 18px;
    height: 12px;
    border-top: 2px solid #050505;
    border-bottom: 2px solid #050505;
}

.ghost-m {
    width: 38px;
    height: 30px;
    margin-left: 22px;
    opacity: .22;
}

.ghost-logo {
    margin-left: 10px;
    font-size: 22px;
}

.ghost-search {
    margin-left: 138px;
    font-size: 16px;
    color: #2a2a2a;
}

.ghost-caret {
    margin-left: 544px;
    border: 6px solid transparent;
    border-top: 6px solid #101010;
    border-bottom: none;
}

.ghost-body {
    flex: 1;
    min-height: 0;
    display: flex;
}

.ghost-nav {
    width: 76px;
    flex: none;
    display: flex;
    flex-direction: column;
    align-items: flex-start;
    padding: 20px 0 0 8px;
}

.ghost-compose {
    width: 56px;
    height: 56px;
    border-radius: 50%;
    box-shadow: 0 0 3px #1e1e1e;
    display: flex;
    align-items: center;
    justify-content: center;
}

.ghost-plus {
    width: 26px;
    height: 26px;
}

.ghost-badge {
    margin: 12px 0 0 13px;
    width: 39px;
    height: 20px;
    border-radius: 10px;
    background-color: #430606;
    color: #6e5252;
    font-size: 13px;
    line-height: 20px;
    text-align: center;
}

.gi {
    width: 24px;
    height: 24px;
    color: #161616;
}

.gi-nav {
    margin: 8px 0 0 16px;
}

.ghost-badge + .gi-nav {
    margin-top: 16px;
}

.gi-hidden {
    visibility: hidden;
}

.gi-short {
    height: 16px;
}

.ghost-user {
    position: relative;
    width: 28px;
    height: 28px;
    margin: 5px 0 0 15px;
    padding: 4px;
    border-radius: 50%;
    background-color: #0e1e36;
    color: #0a1526;
}

.ghost-dot {
    position: absolute;
    right: -3px;
    bottom: -3px;
    width: 10px;
    height: 10px;
    border-radius: 50%;
    background-color: #0c3f12;
}

.ghost-rule {
    width: 33px;
    height: 1px;
    margin: 9px 0 0 15px;
    background-color: #1f1f1f;
}

.ghost-note {
    font-size: 13.5px;
    line-height: 20px;
    color: #1a1a1a;
    margin-left: 25px;
    width: 50px;
}

.ghost-rule + .ghost-note {
    margin-top: 147px;
}

.ghost-link {
    color: #0c1c38;
}

.ghost-main {
    flex: 1;
    min-width: 0;
    padding: 20px 19px 0 0;
}

.grow {
    display: flex;
    align-items: center;
    padding-left: 68px;
}

.grow-right {
    margin-left: auto;
    display: flex;
    align-items: center;
    gap: 16px;
}

.grow-tight {
    gap: 12px;
}

.ghost-text {
    width: 40px;
    margin-right: 3px;
    font-size: 14px;
    color: #151515;
    text-align: right;
    white-space: nowrap;
}

.grow-top {
    height: 24px;
    padding-left: 10px;
    gap: 32px;
}

.grow-subject {
    height: 32px;
    margin-top: 30px;
}

.ghost-subject {
    font-size: 22px;
    color: #141414;
    white-space: nowrap;
}

.grow-sender {
    height: 44px;
    margin-top: 14px;
    padding-left: 12px;
}

.ghost-face {
    width: 40px;
    height: 40px;
    margin-top: 16px;
    border-radius: 50%;
    border: 1px solid #232323;
    padding: 7px;
    color: #1b1b1b;
}

.ghost-from {
    margin: 22px 0 0 16px;
    display: flex;
    flex-direction: column;
    font-size: 13px;
    line-height: 20px;
    color: #151515;
}

.ghost-from b {
    font-size: 14px;
}

.ghost-dots {
    margin: 50px 0 0 68px;
    border-top: 1px dotted #1c1c1c;
}

.grow-attach {
    height: 24px;
    margin-top: 9px;
}

.ghost-count {
    font-size: 14px;
    color: #131313;
    white-space: nowrap;
}

.ghost-thumb {
    margin: 11px 0 0 68px;
    width: 60px;
    height: 119px;
    display: flex;
    flex-direction: column;
    gap: 2px;
    border-bottom: 3px solid #3a3a3a;
    background-color: #2a2a2a;
    padding-top: 2px;
}

.ghost-thumb i {
    display: block;
    height: 1px;
    width: 50px;
    background-color: #111;
}

.ghost-thumb i:nth-child(4) {
    margin-top: 36px;
    width: 22px;
}

.ghost-thumb i:nth-child(n+5) {
    width: 16px;
}

.ghost-reply {
    margin: 55px 0 0 68px;
    width: 80px;
    height: 36px;
    border: 1px solid #2d2d2d;
    border-radius: 4px;
    padding: 5px 0 0 14px;
}

.ghost-scroll {
    width: 11px;
    flex: none;
    margin-top: 56px;
    background-color: #1f1f1f;
}

/* preview window */
.shot {
    position: absolute;
    left: 180px;
    top: 56px;
    width: 939px;
    height: 528px;
    display: flex;
    flex-direction: column;
    box-shadow: 0 6px 26px rgba(0, 0, 0, .55);
    filter: blur(.3px);
}

.s-panel {
    height: 17px;
    flex: none;
    display: flex;
    align-items: center;
    padding-left: 4px;
    background: linear-gradient(#4a4842, #3f3e39);
    color: #cfccc4;
}

.s-title {
    font-size: 9.95px;
    font-weight: 700;
    white-space: nowrap;
}

.s-tray {
    margin-left: auto;
    display: flex;
    align-items: center;
}

.s-net {
    width: 12px;
    height: 12px;
    color: #e0ded7;
}

.s-lang {
    width: 14px;
    height: 14px;
    margin-left: 9px;
    background-color: #cfccc4;
    color: #3c3b37;
    font-size: 8px;
    line-height: 14px;
    text-align: center;
}

.s-sound {
    width: 14px;
    height: 11px;
    margin-left: 8px;
    color: #d6d3cb;
}

.s-time {
    margin-left: 11px;
    font-size: 9.5px;
    color: #cfccc4;
}

.s-power {
    width: 13px;
    height: 13px;
    margin: 0 5px 0 8px;
    color: #d6d3cb;
}

.s-desktop {
    flex: 1;
    min-height: 0;
    display: flex;
}

.s-launcher {
    width: 46px;
    flex: none;
    display: flex;
    flex-direction: column;
    gap: 5px;
    padding: 4px 0 4px 4px;
    background-color: #0b225e;
    border-right: 1px solid #14296a;
}

.s-tile {
    position: relative;
    width: 37px;
    height: 37px;
    flex: none;
    border-radius: 3px;
}

.s-last {
    margin-top: auto;
}

.s-tile-glass {
    background: linear-gradient(#5a6c94, #243a72 55%, #2c4278);
}

.s-tile-ubuntu {
    background: linear-gradient(135deg, #5b7fc6, #1d3f92);
}

.s-tile-gold {
    background-color: #b3a268;
}

.s-tile-red {
    background: linear-gradient(#a8636a, #8f3f48);
}

.s-tile-green {
    background-color: #73a94a;
}

.s-tile-orange {
    background: linear-gradient(#ee7d20, #d9660f);
    border: 1px solid #3a5590;
}

.s-running::before {
    content: "";
    position: absolute;
    left: -4px;
    top: 15px;
    border: 3px solid transparent;
    border-left: 3px solid #e6e6e6;
    border-right: none;
}

.s-active::after {
    content: "";
    position: absolute;
    right: -4px;
    top: 15px;
    border: 3px solid transparent;
    border-right: 3px solid #e6e6e6;
    border-left: none;
}

.s-chrome {
    flex: 1;
    min-width: 0;
    display: flex;
    flex-direction: column;
}

.s-tabs {
    height: 23px;
    flex: none;
    display: flex;
    padding-left: 9px;
    background: linear-gradient(#4d4b45, #403f3a);
    color: #c4c2bb;
}

.s-tab {
    position: relative;
    width: 165px;
    display: flex;
    align-items: center;
    padding: 0 7px;
}

.s-tab::after {
    content: "";
    position: absolute;
    right: 0;
    top: 5px;
    bottom: 5px;
    width: 1px;
    background-color: #7e7c76;
}

.s-nosep::after,
.s-tab-active::after {
    display: none;
}

.s-tab-active {
    background: linear-gradient(#f2f2f1, #e8eaed);
    border-radius: 6px 6px 0 0;
    color: #3f4a55;
}

.s-fav {
    width: 11px;
    height: 11px;
    flex: none;
}

.s-tab-title {
    flex: 1;
    min-width: 0;
    margin-left: 6px;
    font-size: 9.8px;
    white-space: nowrap;
    overflow: hidden;
    -webkit-mask-image: linear-gradient(to left, transparent, #000 16px);
    mask-image: linear-gradient(to left, transparent, #000 16px);
}

.s-close {
    width: 8px;
    height: 8px;
    margin-left: 4px;
    flex: none;
}

.s-new {
    width: 10px;
    height: 10px;
    margin: 6px 0 0 8px;
    color: #e0ded7;
}

.s-toolbar {
    height: 23px;
    flex: none;
    display: flex;
    align-items: center;
    padding-left: 7px;
    background-color: #f0f0ef;
    color: #45484c;
}

.s-tool {
    width: 15px;
    height: 15px;
    margin-right: 7px;
}

.s-off {
    color: #a9aaac;
}

.s-omni {
    width: 767px;
    height: 20px;
    margin-left: -1px;
    display: flex;
    align-items: center;
    padding-left: 5px;
    border-radius: 10px;
    background-color: #e8eaec;
}

.s-info {
    width: 12px;
    height: 12px;
    color: #55585c;
}

.s-file {
    margin-left: 5px;
    padding-right: 7px;
    border-right: 1px solid #a9a9a9;
    font-size: 9.8px;
    line-height: 13px;
    color: #6c6f73;
}

.s-path {
    margin-left: 6px;
    font-size: 9.4px;
    color: #28323c;
    white-space: nowrap;
}

.s-star {
    width: 13px;
    height: 13px;
    margin: 0 5px 0 auto;
    color: #4c4f53;
}

.s-avatar {
    width: 14px;
    height: 14px;
    margin-left: 10px;
    border-radius: 50%;
    background-color: #4a5fc1;
    color: #dfe3f6;
    font-size: 7.5px;
    line-height: 14px;
    text-align: center;
}

.s-menu {
    width: 13px;
    height: 13px;
    margin: 0 0 0 9px;
}

.s-marks {
    height: 25px;
    flex: none;
    display: flex;
    align-items: center;
    padding-left: 10px;
    background-color: #e8e7e5;
    border-bottom: 1px solid #d3d3d1;
    color: #4c545d;
    font-size: 10.4px;
}

.s-mark {
    display: flex;
    align-items: center;
    white-space: nowrap;
}

.s-mark svg {
    width: 10px;
    height: 10px;
    margin-right: 6px;
}

.s-mark-apps {
    margin-right: 12px;
}

.s-mark-vidya {
    margin-right: 16px;
}

.s-page {
    flex: 1;
    min-height: 0;
    background-color: #f5f5f5;
    text-align: center;
}

.s-heading {
    margin: 38px 0 0;
    font-family: "Liberation Serif", serif;
    font-size: 39.4px;
    line-height: 48px;
    font-weight: 400;
    color: #fa002c;
    white-space: nowrap;
}

.s-downloads {
    height: 34px;
    flex: none;
    display: flex;
    align-items: center;
    padding-left: 14px;
    background-color: #e7e6e4;
    border-top: 1px solid #cfcfcd;
    color: #4c545d;
}

.s-dl-icon {
    width: 10px;
    height: 13px;
}

.s-dl-name {
    margin-left: 10px;
    width: 105px;
    font-size: 10.8px;
}

.s-dl-caret {
    width: 6px;
    height: 6px;
    margin-top: 3px;
    border-top: 1.5px solid #6a6a6a;
    border-left: 1.5px solid #6a6a6a;
    transform: rotate(45deg);
}

.s-dl-sep {
    width: 1px;
    height: 25px;
    margin-left: 14px;
    background-color: #cdcdcb;
}

.s-showall {
    width: 62px;
    height: 22px;
    margin-left: auto;
    border-radius: 2px;
    border: 1px solid #d5d4d2;
    background-color: #dcdbd9;
    color: #3c4043;
    font-size: 9.8px;
    font-weight: 700;
}

.s-dl-close {
    width: 9px;
    height: 9px;
    margin: 0 8px 0 8px;
    color: #5c6066;
}

/* zoom controls */
.zoombar {
    position: absolute;
    left: 588px;
    top: 584px;
    width: 124px;
    height: 44px;
    display: flex;
    align-items: center;
    border-radius: 0 0 3px 3px;
    background-color: #0a0a0a;
}

.zb-minus {
    width: 14px;
    height: 2px;
    margin-left: 15px;
    background-color: #5a5a5a;
}

.zb-lens {
    width: 20px;
    height: 20px;
    margin-left: 22px;
    color: #7a7a7a;
}

.zb-plus {
    width: 14px;
    height: 14px;
    margin-left: 24px;
    color: #fff;
}
```
